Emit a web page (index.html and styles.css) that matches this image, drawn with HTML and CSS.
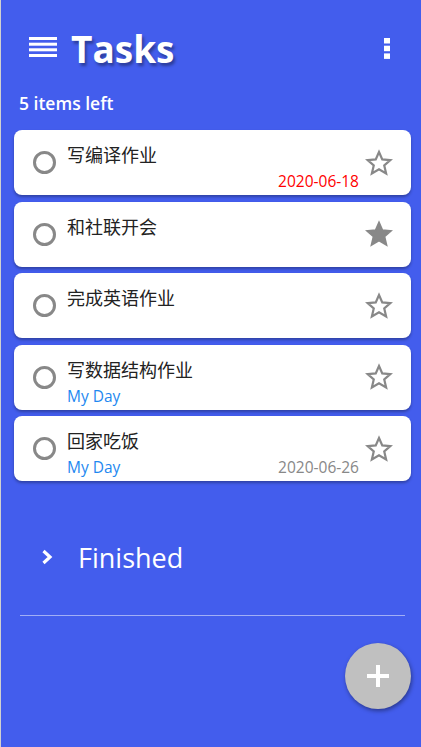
FILE: index.html
```html
<!DOCTYPE html>
<html lang="en">
<head>
    <meta charset="UTF-8">
    <meta name="viewport" content="width=device-width, initial-scale=1.0">
    <title>Tasks</title>
    <link rel="stylesheet" href="styles.css">
</head>
<body>
    <div class="app">
        <header class="header">
            <svg class="menu-icon" width="28" height="20" viewBox="0 0 28 20">
                <rect x="0" y="0" width="28" height="3"/>
                <rect x="0" y="5.7" width="28" height="3"/>
                <rect x="0" y="11.3" width="28" height="3"/>
                <rect x="0" y="17" width="28" height="3"/>
            </svg>
            <h1>Tasks</h1>
            <svg class="more-icon" width="6" height="21" viewBox="0 0 6 21">
                <rect x="0" y="0" width="6" height="5.5"/>
                <rect x="0" y="7.7" width="6" height="5.5"/>
                <rect x="0" y="15.4" width="6" height="5.5"/>
            </svg>
        </header>
        <div class="count">5 items left</div>

        <ul class="tasks">
            <li class="task">
                <span class="check"></span>
                <div class="task-body">
                    <div class="task-title">写编译作业</div>
                    <div class="task-meta"><span class="tag"></span><span class="date overdue">2020-06-18</span></div>
                </div>
                <svg class="star" width="28" height="28" viewBox="0 0 24 24"><path d="M12 2.6l2.8 6.3 6.9.6-5.2 4.6 1.6 6.8L12 17.3l-6.1 3.6 1.6-6.8-5.2-4.6 6.9-.6z"/></svg>
            </li>
            <li class="task">
                <span class="check"></span>
                <div class="task-body">
                    <div class="task-title">和社联开会</div>
                    <div class="task-meta"></div>
                </div>
                <svg class="star filled" width="28" height="28" viewBox="0 0 24 24"><path d="M12 2.6l2.8 6.3 6.9.6-5.2 4.6 1.6 6.8L12 17.3l-6.1 3.6 1.6-6.8-5.2-4.6 6.9-.6z"/></svg>
            </li>
            <li class="task">
                <span class="check"></span>
                <div class="task-body">
                    <div class="task-title">完成英语作业</div>
                    <div class="task-meta"></div>
                </div>
                <svg class="star" width="28" height="28" viewBox="0 0 24 24"><path d="M12 2.6l2.8 6.3 6.9.6-5.2 4.6 1.6 6.8L12 17.3l-6.1 3.6 1.6-6.8-5.2-4.6 6.9-.6z"/></svg>
            </li>
            <li class="task">
                <span class="check"></span>
                <div class="task-body">
                    <div class="task-title">写数据结构作业</div>
                    <div class="task-meta"><span class="tag">My Day</span></div>
                </div>
                <svg class="star" width="28" height="28" viewBox="0 0 24 24"><path d="M12 2.6l2.8 6.3 6.9.6-5.2 4.6 1.6 6.8L12 17.3l-6.1 3.6 1.6-6.8-5.2-4.6 6.9-.6z"/></svg>
            </li>
            <li class="task">
                <span class="check"></span>
                <div class="task-body">
                    <div class="task-title">回家吃饭</div>
                    <div class="task-meta"><span class="tag">My Day</span><span class="date">2020-06-26</span></div>
                </div>
                <svg class="star" width="28" height="28" viewBox="0 0 24 24"><path d="M12 2.6l2.8 6.3 6.9.6-5.2 4.6 1.6 6.8L12 17.3l-6.1 3.6 1.6-6.8-5.2-4.6 6.9-.6z"/></svg>
            </li>
        </ul>

        <div class="finished">
            <svg class="chevron" width="12" height="16" viewBox="0 0 12 16"><path d="M2.5 2l6.5 6-6.5 6"/></svg>
            <span>Finished</span>
        </div>
        <hr class="divider">

        <button class="add">
            <svg width="22" height="22" viewBox="0 0 22 22"><rect x="9" y="0" width="4" height="22"/><rect x="0" y="9" width="22" height="4"/></svg>
        </button>
    </div>
</body>
</html>
```

FILE: styles.css
```css
body {
    margin: 0;
    font-family: "Open Sans", "Noto Sans CJK SC", sans-serif;
}
.app {
    position: relative;
    width: 420px;
    height: 747px;
    background-color: #435ded;
    border-left: 1px solid #d0d0d0;
    overflow: hidden;
}
.header {
    display: flex;
    align-items: center;
    height: 56px;
    padding: 20px 31px 0 28px;
}
.menu-icon {
    fill: #fff;
    margin-top: -2px;
}
.header h1 {
    flex: 1;
    margin: 0 0 0 14px;
    font-size: 37px;
    font-weight: 700;
    color: #fff;
    text-shadow: 2px 3px 3px rgba(0, 0, 0, 0.35);
}
.more-icon {
    fill: #fff;
}
.count {
    padding: 15px 0 0 18px;
    height: 54px;
    color: #fff;
    font-size: 17.5px;
    font-weight: 600;
    box-sizing: border-box;
}
.tasks {
    list-style: none;
    margin: 0;
    padding: 0 10px 0 13px;
    display: flex;
    flex-direction: column;
    gap: 6.5px;
}
.task {
    display: flex;
    align-items: center;
    height: 65px;
    background: #fff;
    border-radius: 8px;
    box-shadow: 0 2px 3px rgba(0, 0, 0, 0.3);
    box-sizing: border-box;
    padding: 0 18px 0 19px;
}
.check {
    width: 17px;
    height: 17px;
    border: 3px solid #888;
    border-radius: 50%;
    flex-shrink: 0;
}
.task-body {
    flex: 1;
    align-self: stretch;
    display: flex;
    flex-direction: column;
    justify-content: space-between;
    padding: 14px 6px 4px 11px;
}
.task-title {
    font-size: 18px;
    line-height: 22px;
    color: #222;
}
.task-meta {
    display: flex;
    justify-content: space-between;
    font-size: 15.5px;
    line-height: 20px;
}
.tag {
    color: #1e88f0;
}
.date {
    color: #888;
}
.date.overdue {
    color: #f00;
}
.star {
    fill: none;
    stroke: #888;
    stroke-width: 1.9;
    stroke-linejoin: miter;
    flex-shrink: 0;
}
.star.filled {
    fill: #888;
}
.finished {
    display: flex;
    align-items: center;
    margin-top: 56px;
    padding-left: 40px;
    height: 40px;
    color: #fff;
    font-size: 27px;
}
.chevron {
    fill: none;
    stroke: #fff;
    stroke-width: 3.2;
    margin-right: 25px;
}
.divider {
    margin: 38px 16px 0 19px;
    border: none;
    border-top: 1px solid rgba(255, 255, 255, 0.5);
}
.add {
    position: absolute;
    left: 344px;
    top: 643px;
    width: 66px;
    height: 66px;
    border-radius: 50%;
    border: none;
    background: #c0c0c0;
    box-shadow: 1px 2px 4px rgba(0, 0, 0, 0.4);
    display: flex;
    align-items: center;
    justify-content: center;
    padding: 0;
}
.add svg {
    fill: #fff;
}
```
